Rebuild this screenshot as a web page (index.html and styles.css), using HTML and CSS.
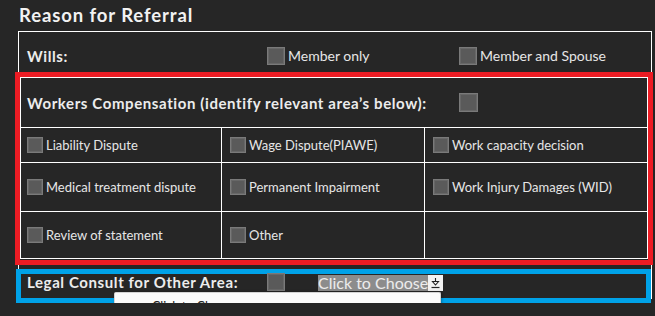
FILE: index.html
```html
<!DOCTYPE html>
<html>
<head>
    <title>Reason for Referral</title>
    <meta name="viewport" content="width=device-width, initial-scale=1.0">
    <link rel="stylesheet" href="styles.css">
</head>

<body>
    <h1 class="title">Reason for Referral</h1>

    <div class="form">
        <!-- Wills -->
        <div class="wills">
            <span class="row-label">Wills:</span>
            <label class="opt opt-first"><span class="box box-md"></span>Member only</label>
            <label class="opt"><span class="box box-md"></span>Member and Spouse</label>
        </div>

        <!-- Workers Compensation (marked red) -->
        <div class="wc-mark">
            <div class="wc">
                <div class="wc-head">
                    <span class="wc-title">Workers Compensation (identify relevant area’s below):</span>
                    <span class="box box-lg"></span>
                </div>
                <div class="wc-grid">
                    <div class="cell"><span class="box"></span>Liability Dispute</div>
                    <div class="cell"><span class="box"></span>Wage Dispute(PIAWE)</div>
                    <div class="cell"><span class="box"></span>Work capacity decision</div>
                    <div class="cell"><span class="box"></span>Medical treatment dispute</div>
                    <div class="cell"><span class="box"></span>Permanent Impairment</div>
                    <div class="cell"><span class="box"></span>Work Injury Damages (WID)</div>
                    <div class="cell"><span class="box"></span>Review of statement</div>
                    <div class="cell"><span class="box"></span>Other</div>
                    <div class="cell"></div>
                </div>
            </div>
        </div>

        <!-- Legal consult (marked blue) -->
        <div class="legal-mark">
            <div class="legal">
                <span class="row-label legal-label">Legal Consult for Other Area:</span>
                <span class="box box-md legal-box"></span>
                <span class="dropdown">
                    <span class="dropdown-text">Click to Choose</span>
                    <span class="dropdown-btn">
                        <svg width="9" height="11" viewBox="0 0 9 11">
                            <path d="M4.5 0V3.5M1.5 3.5H7.5L4.5 7Z" fill="none" stroke="#222" stroke-width="1.1"/>
                            <path d="M0.5 9.5H8.5" stroke="#222" stroke-width="1.2"/>
                        </svg>
                    </span>
                </span>
                <div class="menu">
                    <div class="menu-item">Click to Choose</div>
                </div>
            </div>
        </div>
    </div>
</body>
</html>
```

FILE: styles.css
```css
body {
    margin: 0;
    background: #262626;
    color: #e6e6e6;
    font-family: Lato, "Noto Sans", sans-serif;
}

.title {
    margin: 0 0 5px;
    padding: 4px 0 0 19px;
    font-size: 18.5px;
    line-height: 22px;
    font-weight: 700;
    letter-spacing: 0.9px;
    color: #f2f2f2;
}

.form {
    margin-left: 18px;
    width: 634px;
    box-sizing: border-box;
    border: 1px solid #ffffff;
    margin-bottom: 4px;
}

.box {
    display: inline-block;
    flex: none;
    width: 16px;
    height: 16px;
    box-sizing: border-box;
    background: #5a5a5a;
    border: 1px solid #7a7a7a;
    box-shadow: inset 0 0 0 1px #676767;
    margin-right: 3px;
}

.box-md {
    width: 18px;
    height: 18px;
}

.box-lg {
    width: 19px;
    height: 19px;
}

.row-label {
    width: 240px;
    flex: none;
    font-size: 15px;
    font-weight: 700;
    letter-spacing: 0.6px;
    color: #ececec;
}

/* Wills */
.wills {
    display: flex;
    align-items: center;
    height: 45px;
    box-sizing: border-box;
    padding: 2px 0 0 8px;
}

.opt {
    display: flex;
    align-items: center;
    font-size: 14px;
}

.opt-first {
    width: 192px;
}

/* Workers compensation */
.wc-mark {
    margin-left: 1px;
    width: 628px;
    padding-bottom: 1px;
    outline: 5px solid #ed1c24;
}

.wc {
    border: 1px solid #ffffff;
}

.wc-head {
    display: flex;
    align-items: center;
    height: 49px;
    padding-left: 6px;
    border-bottom: 1px solid #ffffff;
}

.wc-title {
    width: 432px;
    flex: none;
    font-size: 15px;
    font-weight: 700;
    letter-spacing: 0.6px;
    color: #ececec;
}

.wc-grid {
    display: grid;
    grid-template-columns: 200px 202px 222px;
    grid-template-rows: 34px 48px 46px;
    gap: 1px;
    background: #ffffff;
}

.cell {
    display: flex;
    align-items: center;
    padding-left: 8px;
    background: #262626;
    font-size: 13px;
}

.cell:nth-child(3n+1) {
    padding-left: 6px;
}

/* Legal consult */
.legal-mark {
    margin: 14px 0 0 2px;
    width: 625px;
    outline: 5px solid #00a2e8;
}

.legal {
    position: relative;
    display: flex;
    align-items: flex-start;
    height: 24px;
    padding-left: 6px;
}

.legal-label {
    line-height: 16px;
}

.legal-box {
    margin-top: -1px;
}

.dropdown {
    display: flex;
    margin: 1px 0 0 30px;
}

.dropdown-text {
    background: #8c8c8c;
    color: #ececec;
    font-size: 16px;
    line-height: 16px;
}

.dropdown-btn {
    display: flex;
    align-items: center;
    justify-content: center;
    width: 15px;
    height: 16px;
    background: #f2f2f2;
}

/* open dropdown list, drawn over the row */
.menu {
    position: absolute;
    z-index: 5;
    left: 93px;
    top: 18px;
    width: 327px;
    height: 26px;
    box-sizing: border-box;
    padding-top: 6px;
    background: #fbfbfb;
    border: 1px solid #d4d4d4;
    border-bottom: none;
    border-radius: 2px 2px 0 0;
    box-shadow: 1px 0 3px rgba(0, 0, 0, 0.3);
}

.menu-item {
    padding-left: 37px;
    font-size: 12.5px;
    line-height: 15px;
    color: #222222;
}
```
